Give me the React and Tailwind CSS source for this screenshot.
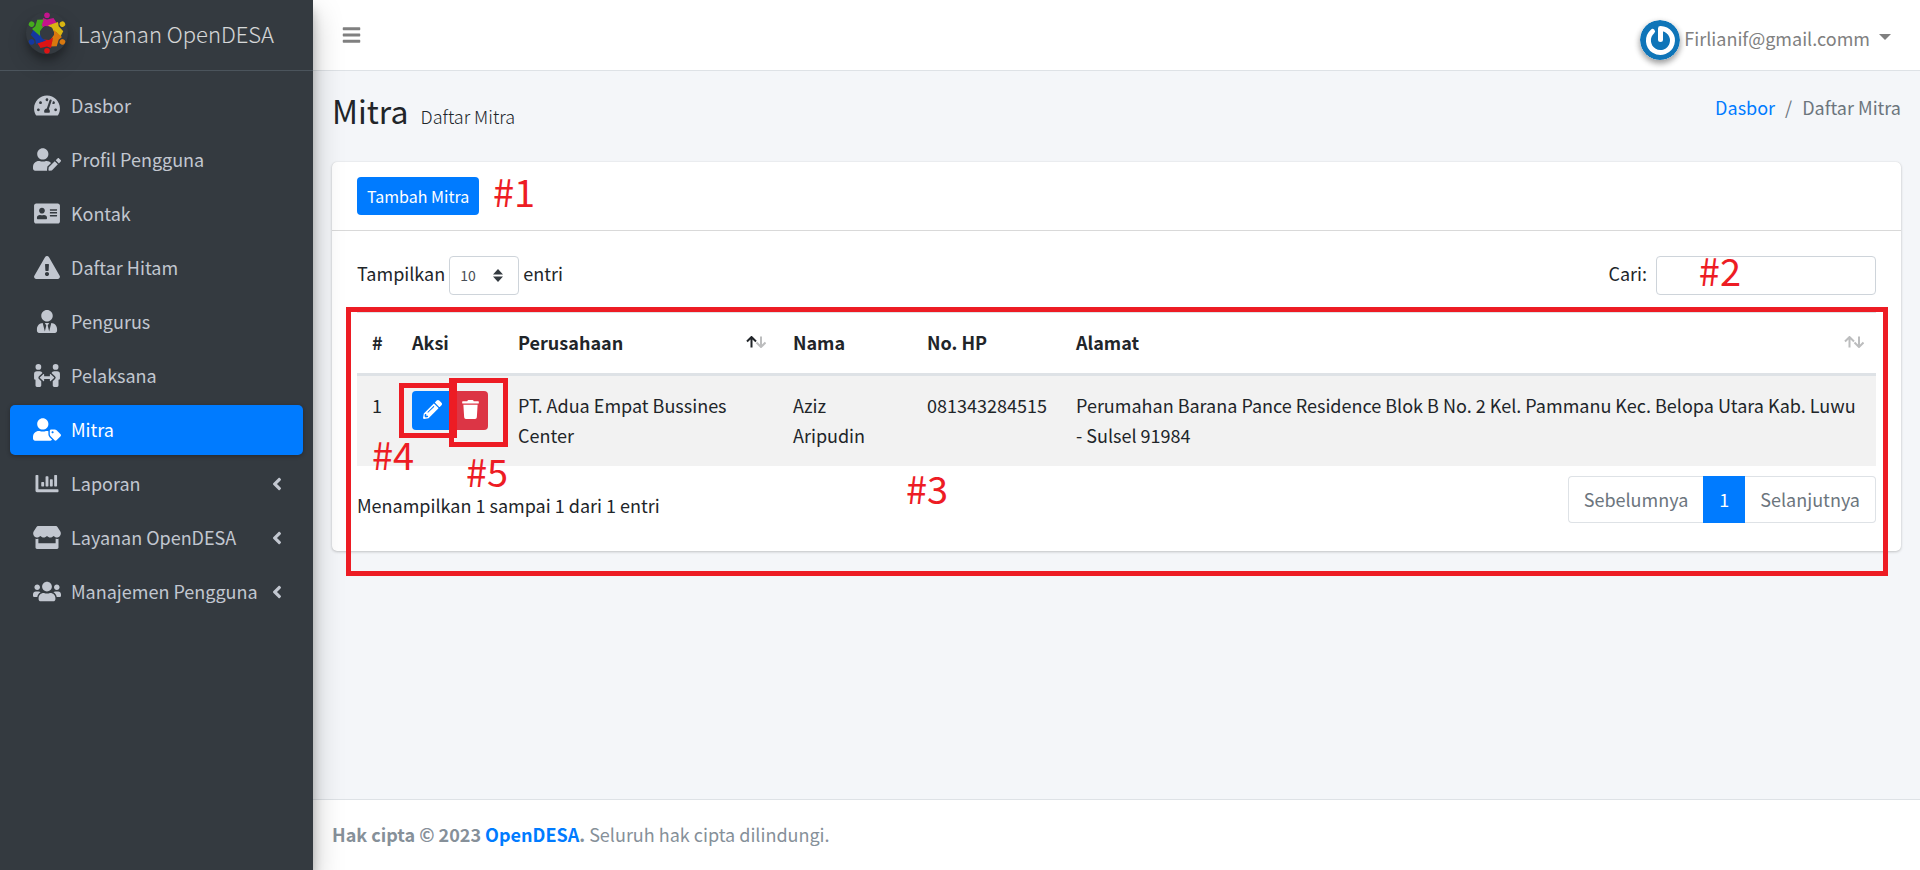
import React, { useState } from "react";
import {
  FaTachometerAlt,
  FaUserEdit,
  FaAddressCard,
  FaExclamationTriangle,
  FaUserTie,
  FaPeopleArrows,
  FaUserTag,
  FaChartBar,
  FaStore,
  FaUsers,
  FaAngleLeft,
  FaBars,
  FaPencilAlt,
  FaTrash,
} from "react-icons/fa";

const menu = [
  { label: "Dasbor", icon: FaTachometerAlt },
  { label: "Profil Pengguna", icon: FaUserEdit },
  { label: "Kontak", icon: FaAddressCard },
  { label: "Daftar Hitam", icon: FaExclamationTriangle },
  { label: "Pengurus", icon: FaUserTie },
  { label: "Pelaksana", icon: FaPeopleArrows },
  { label: "Mitra", icon: FaUserTag, active: true },
  { label: "Laporan", icon: FaChartBar, tree: true },
  { label: "Layanan OpenDESA", icon: FaStore, tree: true },
  { label: "Manajemen Pengguna", icon: FaUsers, tree: true },
];

const partners = [
  {
    company: "PT. Adua Empat Bussines Center",
    name: "Aziz Aripudin",
    phone: "081343284515",
    address:
      "Perumahan Barana Pance Residence Blok B No. 2 Kel. Pammanu Kec. Belopa Utara Kab. Luwu - Sulsel 91984",
  },
];

const people = [
  { color: "#c4148c", angle: 0 },
  { color: "#d9b512", angle: 60 },
  { color: "#d9780f", angle: 120 },
  { color: "#dc1414", angle: 180 },
  { color: "#1438a0", angle: 240 },
  { color: "#46aa1e", angle: 300 },
];

const Logo = () => (
  <svg viewBox="0 0 42 42" className="w-[42px] h-[42px] rounded-full shadow-[0_10px_20px_rgba(0,0,0,.19),0_6px_6px_rgba(0,0,0,.23)]">
    {people.map(({ color, angle }) => (
      <g key={color} fill={color} transform={`rotate(${angle} 21 21)`}>
        <circle cx="21" cy="3.2" r="2.8" />
        <path d="M15 16.5L17 6L21 7.5L27.5 6L31 11.5L25 12.5L24.5 14.5L19 14z" />
      </g>
    ))}
  </svg>
);

const Avatar = () => (
  <svg viewBox="0 0 40 40" className="w-10 h-10 rounded-full shadow-[0_3px_6px_rgba(0,0,0,.25),0_3px_6px_rgba(0,0,0,.2)]">
    <circle cx="20" cy="20" r="20" fill="#0f75b8" />
    <path d="M12.5 11.5a12 12 0 1 0 8-3v11" fill="none" stroke="#fff" strokeWidth="5" strokeLinecap="round" strokeLinejoin="round" />
  </svg>
);

const Sort = ({ active }) => (
  <svg viewBox="0 0 20 12" className="w-5 h-3" fill="none" strokeWidth="2">
    <path d="M10.5 6.5L15 11L19.5 6.5M15 11V0.5" stroke="#bcbdbe" />
    <path d="M1 5.5L5.5 1L10 5.5M5.5 1v10.5" stroke={active ? "#212529" : "#bcbdbe"} />
  </svg>
);

const Sidebar = () => (
  <aside className="relative z-10 w-[313px] shrink-0 bg-[#343a40] text-[#c2c7d0] shadow-[0_14px_28px_rgba(0,0,0,.25),0_10px_10px_rgba(0,0,0,.22)]">
    <a href="#" className="flex items-center h-[71px] pb-1 pl-[26px] gap-[10px] border-b border-[#4b545c]">
      <Logo />
      <span className="pb-px text-[22px] font-light text-white/80">Layanan OpenDESA</span>
    </a>
    <nav className="flex flex-col gap-1 px-[10px] pt-[10px]">
      {menu.map(({ label, icon: Icon, active, tree }) => (
        <a
          key={label}
          href="#"
          className={`flex items-center h-[50px] pl-[22px] pr-4 rounded-[5px] ${
            active ? "bg-[#007bff] text-white shadow-[0_1px_4px_rgba(0,0,0,.3)]" : ""
          }`}
        >
          <span className="flex justify-center w-[30px] mr-[9px] pb-px">
            <Icon className="h-[23px] w-[28px]" />
          </span>
          <span className="grow pb-[2px]">{label}</span>
          {tree && <FaAngleLeft className="w-5 h-5" />}
        </a>
      ))}
    </nav>
  </aside>
);

const Topbar = () => (
  <header className="flex items-center justify-between h-[71px] pl-[29px] pr-[29px] bg-white border-b border-[#dee2e6] text-[#808080]">
    <button aria-label="Menu">
      <FaBars className="w-[19px] h-5" />
    </button>
    <button className="flex items-center pt-[9px]">
      <Avatar />
      <span className="ml-1 pb-1">Firlianif@gmail.comm</span>
      <span className="ml-[9px] mb-[6px] border-x-[6px] border-t-[6px] border-x-transparent border-t-[#808080]" />
    </button>
  </header>
);

const Note = ({ children, className }) => (
  <span className={`absolute z-20 text-[38px] leading-none text-[#ed1c24] ${className}`}>{children}</span>
);

const App = () => {
  const [search, setSearch] = useState("");

  return (
    <div className="relative flex min-h-screen bg-[#f4f6f9] text-[18px] leading-[30px] text-[#212529] font-['Noto_Sans_CJK_SC',sans-serif]">
      <Sidebar />
      <div className="flex flex-col grow min-w-0">
        <Topbar />
        <main className="grow px-[19px]">
          <div className="flex justify-between pt-[17px] pb-[30px]">
            <h1 className="text-[32px] leading-[44px]">
              Mitra <small className="ml-[5px] text-[18px] leading-none font-light">Daftar Mitra</small>
            </h1>
            <nav className="flex gap-[10px] pt-1 text-[#6c757d]">
              <a href="#" className="text-[#007bff]">Dasbor</a>
              <span>/</span>
              <span>Daftar Mitra</span>
            </nav>
          </div>

          <section className="relative bg-white rounded-[5px] shadow-[0_0_1px_rgba(0,0,0,.13),0_1px_3px_rgba(0,0,0,.2)]">
            <div className="px-[25px] py-[15px] border-b border-black/15">
              <button className="block h-[38px] px-[10px] rounded bg-[#007bff] text-[16px] leading-[36px] text-white">
                Tambah Mitra
              </button>
            </div>

            <div className="px-[25px] pt-[25px] pb-[28px]">
              <div className="flex justify-between pb-[17px] leading-[34px]">
                <label className="flex items-start gap-1">
                  Tampilkan
                  <span className="relative">
                    <select className="block appearance-none w-[70px] h-[39px] pl-[10px] pb-[2px] rounded border border-[#ced4da] bg-white text-[14px] text-[#495057]">
                      <option>10</option>
                      <option>25</option>
                      <option>50</option>
                    </select>
                    <svg viewBox="0 0 10 13" className="absolute right-4 top-[13px] w-[10px] h-[13px]" fill="#343a40">
                      <path d="M0 5.5L5 0l5 5.5zM0 7.5L5 13l5-5.5z" />
                    </svg>
                  </span>
                  entri
                </label>
                <label className="flex items-start gap-[9px]">
                  Cari:
                  <input
                    type="search"
                    value={search}
                    onChange={(e) => setSearch(e.target.value)}
                    className="w-[220px] h-[39px] px-[10px] rounded border border-[#ced4da] text-[16px]"
                  />
                </label>
              </div>

              <table className="w-full border-t border-[#dee2e6] text-left">
                <thead>
                  <tr className="h-[62px] border-b-[3px] border-[#dee2e6]">
                    <th className="w-10 pl-[15px] pb-[2px]">#</th>
                    <th className="w-[106px] pl-[15px] pb-[2px]">Aksi</th>
                    <th className="w-[275px] pl-[15px] pr-[12px] pb-[2px]">
                      <span className="flex items-center justify-between">Perusahaan <Sort active /></span>
                    </th>
                    <th className="w-[134px] pl-[15px] pb-[2px]">Nama</th>
                    <th className="w-[149px] pl-[15px] pb-[2px]">No. HP</th>
                    <th className="pl-[15px] pr-[12px] pb-[2px]">
                      <span className="flex items-center justify-between">Alamat <Sort /></span>
                    </th>
                  </tr>
                </thead>
                <tbody>
                  {partners.map((item, i) => (
                    <tr key={item.phone} className="bg-[#f2f2f2] align-top">
                      <td className="pl-[15px] pt-[14px] pb-4">{i + 1}</td>
                      <td className="pl-[15px] py-[15px]">
                        <div className="flex">
                          <button aria-label="Ubah" className="flex items-center justify-center w-10 h-[39px] pb-[2px] rounded-l bg-[#007bff] text-white">
                            <FaPencilAlt className="w-[19px] h-[19px]" />
                          </button>
                          <button aria-label="Hapus" className="flex items-center justify-center w-9 h-[39px] pb-[2px] rounded-r bg-[#dc3545] text-white">
                            <FaTrash className="w-[17px] h-[19px]" />
                          </button>
                        </div>
                      </td>
                      <td className="pl-[15px] pr-[40px] pt-[14px] pb-4">{item.company}</td>
                      <td className="pl-[15px] pr-[35px] pt-[14px] pb-4">{item.name}</td>
                      <td className="pl-[15px] pt-[14px] pb-4">{item.phone}</td>
                      <td className="pl-[15px] pr-[15px] pt-[14px] pb-4">{item.address}</td>
                    </tr>
                  ))}
                </tbody>
              </table>

              <div className="flex justify-between pt-[10px]">
                <p className="pt-[14px]">Menampilkan 1 sampai 1 dari 1 entri</p>
                <div className="flex h-[47px] text-[#6c757d]">
                  <button className="px-[15px] pb-[2px] border border-r-0 border-[#dee2e6] rounded-l">Sebelumnya</button>
                  <button className="w-[42px] pb-[2px] bg-[#007bff] text-white">1</button>
                  <button className="px-[15px] pb-[2px] border border-l-0 border-[#dee2e6] rounded-r">Selanjutnya</button>
                </div>
              </div>
            </div>

            {/* Numbered guide marks over the card */}
            <Note className="left-[161px] top-[10px]">#1</Note>
            <Note className="right-[160px] top-[89px]">#2</Note>
            <Note className="left-[574px] top-[307px]">#3</Note>
            <Note className="left-[40px] top-[273px]">#4</Note>
            <Note className="left-[134px] top-[290px]">#5</Note>
            <div className="pointer-events-none absolute left-[14px] right-[13px] top-[145px] h-[269px] border-[5px] border-[#ed1c24]" />
            <div className="pointer-events-none absolute left-[67px] top-[221px] w-[58px] h-[55px] border-[5px] border-[#ed1c24]" />
            <div className="pointer-events-none absolute left-[117px] top-[216px] w-[59px] h-[69px] border-[5px] border-[#ed1c24]" />
          </section>
        </main>
        <footer className="h-[71px] px-[19px] pt-[19px] bg-white border-t border-[#dee2e6] text-[#869099]">
          <strong>
            Hak cipta © 2023 <a href="#" className="text-[#007bff]">OpenDESA</a>.
          </strong>{" "}
          Seluruh hak cipta dilindungi.
        </footer>
      </div>
    </div>
  );
};

export default App;
